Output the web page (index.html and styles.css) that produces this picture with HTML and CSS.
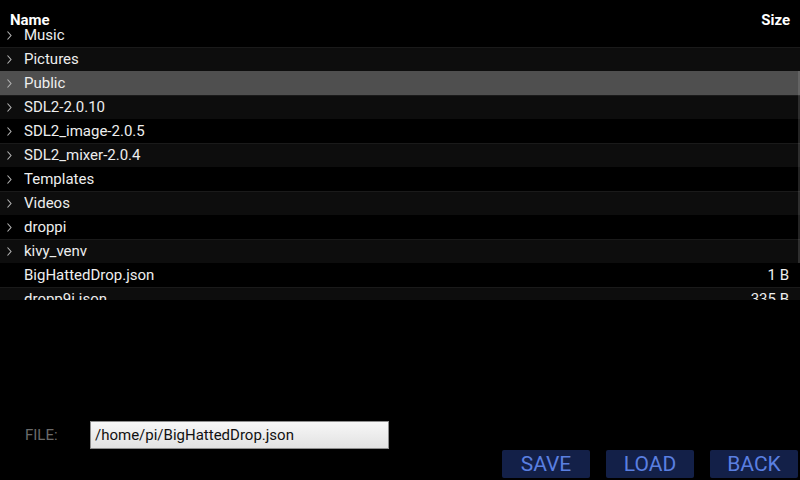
FILE: index.html
```html
<!DOCTYPE html>
<html>
<head>
<meta charset="utf-8">
<link rel="stylesheet" href="styles.css">
</head>
<body>
<div class="app">
  <div class="header">
    <span class="h-name">Name</span>
    <span class="h-size">Size</span>
  </div>
  <div class="list">
    <div class="row odd"><span class="arrow"><svg width="7" height="11" viewBox="0 0 7 11"><polyline points="1.5,1.5 5,5.5 1.5,9.5" fill="none" stroke="#b4b4b4" stroke-width="1.1"/></svg></span><span class="name">Music</span><span class="size"></span></div>
    <div class="row even"><span class="arrow"><svg width="7" height="11" viewBox="0 0 7 11"><polyline points="1.5,1.5 5,5.5 1.5,9.5" fill="none" stroke="#b4b4b4" stroke-width="1.1"/></svg></span><span class="name">Pictures</span><span class="size"></span></div>
    <div class="row selected"><span class="arrow"><svg width="7" height="11" viewBox="0 0 7 11"><polyline points="1.5,1.5 5,5.5 1.5,9.5" fill="none" stroke="#b4b4b4" stroke-width="1.1"/></svg></span><span class="name">Public</span><span class="size"></span></div>
    <div class="row even"><span class="arrow"><svg width="7" height="11" viewBox="0 0 7 11"><polyline points="1.5,1.5 5,5.5 1.5,9.5" fill="none" stroke="#b4b4b4" stroke-width="1.1"/></svg></span><span class="name">SDL2-2.0.10</span><span class="size"></span></div>
    <div class="row odd"><span class="arrow"><svg width="7" height="11" viewBox="0 0 7 11"><polyline points="1.5,1.5 5,5.5 1.5,9.5" fill="none" stroke="#b4b4b4" stroke-width="1.1"/></svg></span><span class="name">SDL2_image-2.0.5</span><span class="size"></span></div>
    <div class="row even"><span class="arrow"><svg width="7" height="11" viewBox="0 0 7 11"><polyline points="1.5,1.5 5,5.5 1.5,9.5" fill="none" stroke="#b4b4b4" stroke-width="1.1"/></svg></span><span class="name">SDL2_mixer-2.0.4</span><span class="size"></span></div>
    <div class="row odd"><span class="arrow"><svg width="7" height="11" viewBox="0 0 7 11"><polyline points="1.5,1.5 5,5.5 1.5,9.5" fill="none" stroke="#b4b4b4" stroke-width="1.1"/></svg></span><span class="name">Templates</span><span class="size"></span></div>
    <div class="row even"><span class="arrow"><svg width="7" height="11" viewBox="0 0 7 11"><polyline points="1.5,1.5 5,5.5 1.5,9.5" fill="none" stroke="#b4b4b4" stroke-width="1.1"/></svg></span><span class="name">Videos</span><span class="size"></span></div>
    <div class="row odd"><span class="arrow"><svg width="7" height="11" viewBox="0 0 7 11"><polyline points="1.5,1.5 5,5.5 1.5,9.5" fill="none" stroke="#b4b4b4" stroke-width="1.1"/></svg></span><span class="name">droppi</span><span class="size"></span></div>
    <div class="row even"><span class="arrow"><svg width="7" height="11" viewBox="0 0 7 11"><polyline points="1.5,1.5 5,5.5 1.5,9.5" fill="none" stroke="#b4b4b4" stroke-width="1.1"/></svg></span><span class="name">kivy_venv</span><span class="size"></span></div>
    <div class="row odd"><span class="arrow"></span><span class="name">BigHattedDrop.json</span><span class="size">1 B</span></div>
    <div class="row even"><span class="arrow"></span><span class="name">dropp9i.json</span><span class="size">335 B</span></div>
    <div class="scrollbar"></div>
  </div>
  <div class="filebar">
    <span class="file-label">FILE:</span>
    <div class="file-input">/home/pi/BigHattedDrop.json</div>
  </div>
  <div class="buttons">
    <div class="btn">SAVE</div>
    <div class="btn">LOAD</div>
    <div class="btn">BACK</div>
  </div>
</div>
</body>
</html>
```

FILE: styles.css
```css
* { box-sizing: border-box; }
html, body {
  margin: 0;
  padding: 0;
  background: #000;
}
body {
  font-family: Roboto, "Noto Sans", sans-serif;
  font-size: 15px;
  color: #eeeeee;
}
.app {
  width: 800px;
  height: 480px;
  display: flex;
  flex-direction: column;
  overflow: hidden;
}
.header {
  height: 23px;
  padding-top: 12px;
  line-height: 17.6px;
  display: flex;
  justify-content: space-between;
  padding-left: 10px;
  padding-right: 10px;
  font-weight: bold;
  color: #fff;
  position: relative;
  z-index: 2;
  flex: none;
}
.list {
  height: 277px;
  overflow: hidden;
  position: relative;
  flex: none;
}
.row {
  height: 24px;
  line-height: 24px;
  display: flex;
  align-items: center;
  padding-right: 11px;
}
.row.odd { background: transparent; }
.row.even { background: #0d0d0d; box-shadow: inset 0 1px 0 #1a1a1a; }
.row.selected { background: #4f4f4f; }
.arrow {
  width: 24px;
  flex: none;
  display: flex;
  align-items: center;
  padding-left: 6px;
  height: 24px;
}
.arrow svg { display: block; }
.name { flex: 1; white-space: nowrap; overflow: hidden; }
.size { flex: none; text-align: right; }
.scrollbar {
  position: absolute;
  right: 0;
  top: 48px;
  width: 2px;
  height: 192px;
  background: rgba(179, 179, 179, 0.2);
}
.filebar {
  margin-top: 121px;
  height: 28px;
  display: flex;
  align-items: center;
  flex: none;
}
.file-label {
  width: 90px;
  padding-left: 25px;
  color: #6a6a6a;
}
.file-input {
  width: 299px;
  height: 28px;
  border: 1px solid #8e8e8e;
  background: linear-gradient(#f7f7f7, #e2e2e2);
  color: #111;
  padding-left: 4px;
  line-height: 26px;
}
.buttons {
  margin-top: 1px;
  height: 28px;
  display: flex;
  justify-content: flex-end;
  gap: 16px;
  padding-right: 2px;
  flex: none;
}
.btn {
  width: 88px;
  height: 28px;
  background: #132048;
  border-radius: 2px;
  color: #5a7fe0;
  font-size: 21px;
  line-height: 28px;
  text-align: center;
}
```
